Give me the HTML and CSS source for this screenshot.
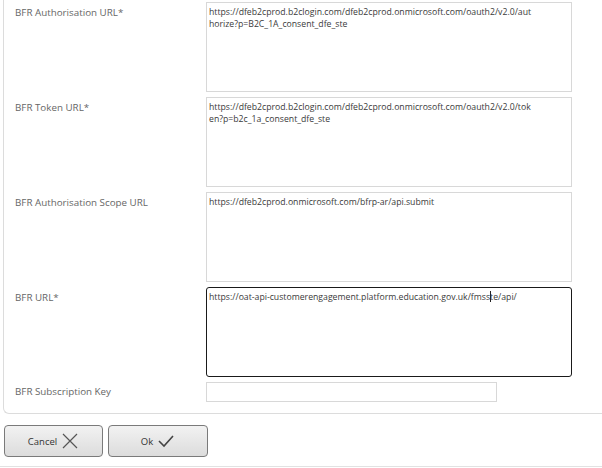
FILE: index.html
```html
<!DOCTYPE html>
<html>
<head>
<meta charset="utf-8">
<link rel="stylesheet" href="styles.css">
</head>
<body>
<div class="panel">
  <div class="row">
    <div class="label">BFR Authorisation URL*</div>
    <div class="area"><span class="ln">https://dfeb2cprod.b2clogin.com/dfeb2cprod.onmicrosoft.com/oauth2/v2.0/aut</span><span class="ln">horize?p=B2C_1A_consent_dfe_ste</span></div>
  </div>
  <div class="row">
    <div class="label">BFR Token URL*</div>
    <div class="area"><span class="ln">https://dfeb2cprod.b2clogin.com/dfeb2cprod.onmicrosoft.com/oauth2/v2.0/tok</span><span class="ln">en?p=b2c_1a_consent_dfe_ste</span></div>
  </div>
  <div class="row">
    <div class="label">BFR Authorisation Scope URL</div>
    <div class="area"><span class="ln">https://dfeb2cprod.onmicrosoft.com/bfrp-ar/api.submit</span></div>
  </div>
  <div class="row">
    <div class="label">BFR URL*</div>
    <div class="area focused"><span class="ln">https://oat-api-customerengagement.platform.education.gov.uk/fmss<span class="caret"></span>te/api/</span></div>
  </div>
  <div class="row short">
    <div class="label">BFR Subscription Key</div>
    <div class="input"></div>
  </div>
</div>
<div class="actions">
  <button class="btn">Cancel
    <svg class="icon" width="18" height="16" viewBox="0 0 18 16"><path d="M2 1 L16 15 M16 1 L2 15" stroke="#555" stroke-width="1.2" fill="none"/></svg>
  </button>
  <button class="btn">Ok
    <svg class="icon" width="18" height="16" viewBox="0 0 18 16"><path d="M2 8 L7 13 L16 3" stroke="#444" stroke-width="1.6" fill="none"/></svg>
  </button>
</div>
<div class="footer"></div>
</body>
</html>
```
FILE: styles.css
```css
html, body {
  margin: 0;
  padding: 0;
  background: #fff;
  overflow: hidden;
}
body {
  font-family: "Open Sans", "Noto Sans", sans-serif;
  color: #555;
  width: 602px;
  height: 468px;
}
.panel {
  margin-left: 3px;
  border-left: 1px solid #dcdcdc;
  border-bottom: 1px solid #dcdcdc;
  border-bottom-left-radius: 6px;
  padding: 2px 0 11px 11px;
  display: flex;
  flex-direction: column;
  gap: 5px;
}
.row {
  display: grid;
  grid-template-columns: 191px 366px;
  align-items: start;
}
.label {
  font-size: 9.8px;
  padding-top: 5px;
  line-height: 12px;
  color: #666;
  white-space: nowrap;
}
.area {
  box-sizing: border-box;
  height: 90px;
  border: 1px solid #d8d8d8;
  padding: 3px 2px;
  font-size: 8.7px;
  line-height: 12px;
  color: #3a3a3a;
  background: #fff;
}
.ln {
  display: block;
  white-space: nowrap;
}
.area.focused {
  border: 1.5px solid #1a1a1a;
  border-radius: 3px;
}
.caret {
  display: inline-block;
  width: 1px;
  height: 11px;
  background: #222;
  vertical-align: -2px;
  margin-right: -1px;
}
.input {
  box-sizing: border-box;
  width: 291px;
  height: 20px;
  border: 1px solid #d8d8d8;
}
.row.short .label {
  padding-top: 4px;
}
.actions {
  display: flex;
  gap: 5px;
  padding: 11px 0 0 4px;
  height: 32px;
}
.btn {
  box-sizing: border-box;
  width: 99px;
  height: 32px;
  border: 1px solid #7a7a7a;
  border-radius: 4px;
  background: linear-gradient(#f2f2f2, #dcdcdc);
  font-family: "Open Sans", "Noto Sans", sans-serif;
  font-size: 9.5px;
  color: #333;
  display: flex;
  align-items: center;
  justify-content: center;
  gap: 4px;
  padding: 0;
}
.btn + .btn {
  width: 100px;
}
.footer {
  margin-top: 9px;
  border-top: 1px solid #e2e2e2;
}
```
